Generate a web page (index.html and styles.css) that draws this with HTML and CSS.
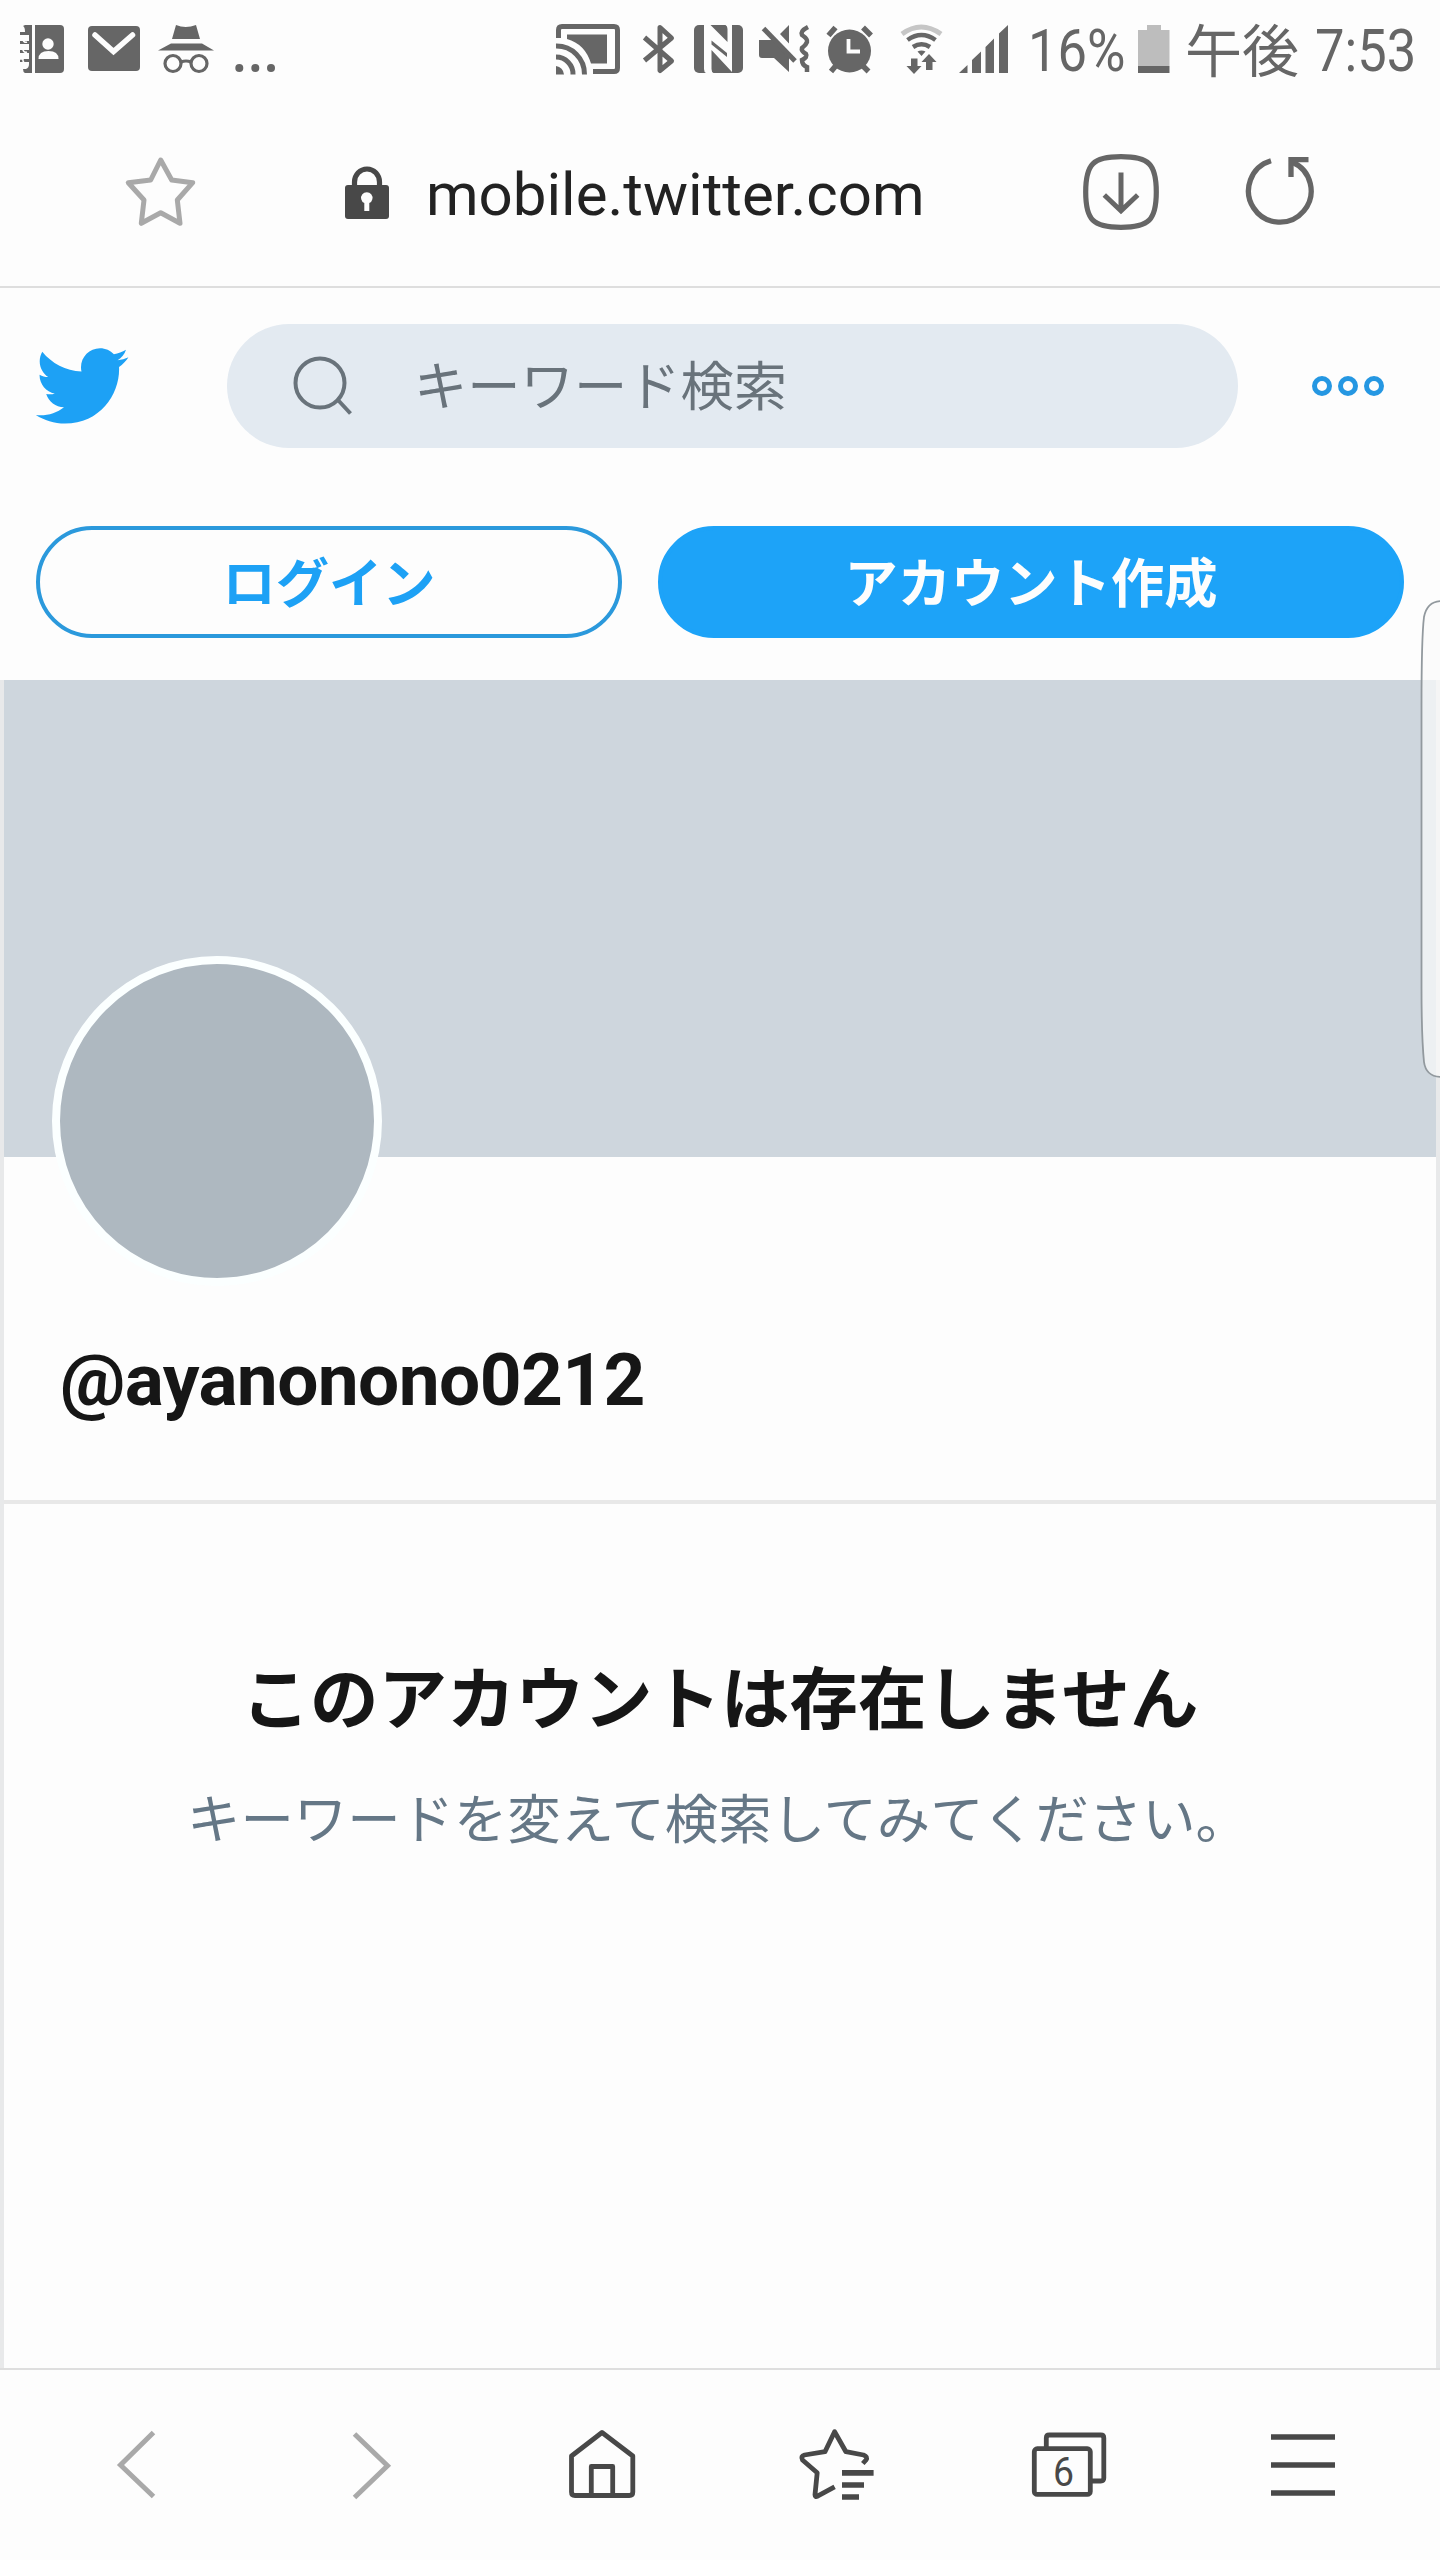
FILE: index.html
```html
<!DOCTYPE html>
<html lang="ja">
<head>
<meta charset="utf-8">
<title>mobile.twitter.com</title>
<link rel="stylesheet" href="styles.css">
</head>
<body>
<div class="screen">
  <header class="status">
    <div class="status-group">
      <svg width="60" height="64" viewBox="16 18 60 64">
        <path class="fill" d="M35 25h25q4 0 4 4v40q0 4-4 4H35z"/>
        <path class="fill" d="M25 25h7v48h-7q-2-1-2-4h3q3-1 3-5v-2h-9v-3h9v-6h-9v-3h9v-6h-9v-3h9v-6h-9v-3h5q0-5-2-6z"/>
        <path class="paper-line" d="M20 38h3v2q1 3 4 2M20 48h3v2q1 3 4 2M20 59h3v2q1 3 4 2"/>
        <circle class="paper" cx="48" cy="44" r="5.7"/>
        <path class="paper" d="M38.500 59q0-8 10-8t10 8z"/>
      </svg>
      <svg width="74" height="64" viewBox="76 18 74 64">
        <rect class="fill" x="88" y="26" width="52" height="45" rx="4"/>
        <path d="M95 35l18.500 16.500L132.500 35" fill="none" stroke="#fdfdfd" stroke-width="5.500" stroke-linecap="round"/>
      </svg>
      <svg width="75" height="64" viewBox="150 18 75 64">
        <path class="fill" d="M176 25q9.500 4 20 0l4 14h-28zM171 43.500h31l12 7h-56z"/>
        <g class="line" stroke-width="3.200"><circle cx="173" cy="63.500" r="8"/><circle cx="199" cy="63.500" r="8"/><path d="M181 62q5-2 10 0"/></g>
      </svg>
      <svg width="60" height="64" viewBox="225 18 60 64">
        <g class="fill"><circle cx="239.300" cy="68" r="4"/><circle cx="255.300" cy="68" r="4"/><circle cx="271" cy="68" r="4"/></g>
      </svg>
    </div>
    <div class="status-group">
      <svg width="80" height="64" viewBox="550 18 80 64">
        <path class="line" stroke-width="5" d="M558.500 38V30q0-3.500 3.500-3.500h52q3.500 0 3.500 3.500v38q0 3.500-3.500 3.500H593"/>
        <path class="fill" d="M567 34.500h40v29H591Q585 44 567 39z"/>
        <path class="line" stroke-width="5" d="M556 46a28 28 0 0 1 28.500 28.500M556 57a17 17 0 0 1 17 17.500"/>
        <path class="fill" d="M556 66q7 1 8 8.500h-8z"/>
      </svg>
      <svg width="54" height="64" viewBox="630 18 54 64">
        <path class="line" stroke-width="5" stroke-linejoin="round" d="M644.500 37.500L671.500 61 660 70.500V27.500L671.500 38 644.500 60.500"/>
      </svg>
      <svg width="66" height="64" viewBox="684 18 66 64">
        <rect class="fill" x="694" y="25" width="49" height="48" rx="5"/>
        <path class="paper" d="M704 25h6.500l17 17V29q0-3-2-4h6.500v47L711.500 50v19q0 3 2 4H706q-2-1-2-4z"/>
        <path class="fill" d="M711.500 40.500v4L727 57v-4z"/>
      </svg>
      <svg width="66" height="64" viewBox="750 18 66 64">
        <path class="fill" d="M759 40h16l14 14v18L774 58H762q-3 0-3-3zM780 34l9-9v18.500z"/>
        <path class="line" stroke-width="5" d="M763.500 28.500L795 61"/>
        <path class="line" stroke-width="4.500" d="M808 27q-8 4-6 8 6 4 5 7t-5 6q-1 3 4 6 2 3-4 6 0 5 5 7v5"/>
      </svg>
      <svg width="70" height="64" viewBox="816 18 70 64">
        <circle class="fill" cx="849.500" cy="51" r="21.500"/>
        <path class="line" stroke-width="5.500" d="M828.500 35.500l7-8M871 35.500l-8-8M831 71.500l5-6M868.500 71.500l-6-6"/>
        <path d="M848.500 39v12.500H860" fill="none" stroke="#fdfdfd" stroke-width="3.800"/>
      </svg>
      <svg width="64" height="64" viewBox="886 18 64 64">
        <path d="M902 34q19-14 39 0" fill="none" stroke="#c6c6c6" stroke-width="5"/>
        <path class="line" stroke-width="4.500" d="M907.500 40q14-10 28 0M913 47q8.500-5.500 17 0"/>
        <path class="fill" d="M917.500 51.500q4-2 8 0l-4 4.500zM911 58.500h6.500V66h4l-7.500 8-7.500-8h4.500zM926 70V62h-4.500l7.500-8 7.500 8h-4v8z"/>
      </svg>
      <svg width="70" height="64" viewBox="950 18 70 64">
        <path class="fill" d="M959 73h8.500v-8zM972 73h9V51.500l-9 8.500zM985.500 73h8.500V38.500l-8.500 8.500zM999 73h9V25l-9 8.500z"/>
      </svg>
      <span class="level">16%</span>
      <svg width="44" height="64" viewBox="1132 18 44 64">
        <path d="M1147 25h14v5h8.500v36h-31.500V30h9z" fill="#bdbdbd"/>
        <path class="fill" d="M1138 66h31.500v7H1138z"/>
      </svg>
      <span class="meridiem">午後</span>
      <span class="clock">7:53</span>
    </div>
  </header>

  <div class="address">
    <svg class="bookmark" width="76" height="76" viewBox="122 154 76 76">
      <path d="M160.700 160l11 20 21 2.700L177.300 200l2.700 23.300-19.300-10.600-19.400 10.600L144 200l-15.700-17.300 22.400-2.700z" fill="none" stroke="#a9a9a9" stroke-width="5" stroke-linejoin="round"/>
    </svg>
    <div class="url">
      <svg width="44" height="56" viewBox="345 164 44 56">
        <path d="M354.500 187v-5a12 12.500 0 0 1 25 0v5" fill="none" stroke="#484848" stroke-width="5.200"/>
        <rect x="345" y="185" width="44" height="34" rx="3" fill="#484848"/>
        <path class="paper" d="M364.300 211v-8a5.700 5.700 0 1 1 5 0v8z"/>
      </svg>
      <span class="host">mobile.twitter.com</span>
    </div>
    <svg class="download" width="80" height="80" viewBox="1080.700 152.500 80 80">
      <path class="line" stroke-width="5.200" d="M1120.700 157.200c28 0 35.300 7.300 35.300 35.300s-7.300 35.300-35.300 35.300-35.300-7.300-35.300-35.300 7.300-35.300 35.300-35.300z"/>
      <path class="line" stroke-width="5" d="M1120.700 173v39M1104 195.500l16.700 15.700 16.700-15.700"/>
    </svg>
    <svg class="reload" width="76" height="80" viewBox="1242 152 76 80">
      <path class="line" stroke-width="5.300" d="M1272 160.800A31.300 31.300 0 1 0 1293 162"/>
      <path class="line" stroke-width="5.300" d="M1292 177V159.600h17.500"/>
    </svg>
  </div>

  <nav class="topbar">
    <svg class="bird" width="98" height="98" viewBox="0 0 24 24"><path fill="#1da1f5" d="M23.643 4.937c-.835.37-1.732.62-2.675.733.962-.576 1.700-1.490 2.048-2.578-.9.534-1.897.922-2.958 1.130-.85-.904-2.060-1.470-3.400-1.470-2.572 0-4.658 2.086-4.658 4.660 0 .364.042.718.120 1.060-3.873-.195-7.304-2.050-9.602-4.868-.4.690-.630 1.490-.630 2.342 0 1.616.823 3.043 2.072 3.878-.764-.025-1.482-.234-2.110-.583v.060c0 2.257 1.605 4.140 3.737 4.568-.392.106-.803.162-1.227.162-.3 0-.593-.028-.877-.082.593 1.850 2.313 3.198 4.352 3.234-1.595 1.250-3.604 1.995-5.786 1.995-.376 0-.747-.022-1.112-.065 2.062 1.323 4.510 2.093 7.140 2.093 8.570 0 13.255-7.098 13.255-13.254 0-.2-.005-.402-.014-.602.910-.658 1.700-1.477 2.323-2.410z"/></svg>
    <div class="search">
      <svg width="62" height="62" viewBox="292 355 62 62">
        <g fill="none" stroke="#69737b" stroke-width="4"><circle cx="320" cy="383" r="24.500"/><path d="M337.500 399.500l13 14"/></g>
      </svg>
      <span>キーワード検索</span>
    </div>
    <svg class="more" width="76" height="24" viewBox="1310 374 76 24">
      <g fill="none" stroke="#2597e2" stroke-width="5"><circle cx="1322" cy="386" r="7.500"/><circle cx="1348" cy="386" r="7.500"/><circle cx="1374" cy="386" r="7.500"/></g>
    </svg>
  </nav>

  <div class="actions">
    <a class="btn login">ログイン</a>
    <a class="btn signup">アカウント作成</a>
  </div>

  <main class="profile">
    <div class="banner"></div>
    <div class="identity">
      <div class="avatar"></div>
      <div class="handle">@ayanonono0212</div>
    </div>
    <section class="empty">
      <h1>このアカウントは存在しません</h1>
      <p>キーワードを変えて検索してみてください。</p>
    </section>
  </main>

  <footer class="toolbar">
    <svg class="nav-back" width="60" height="80" viewBox="106 2424 60 80"><path class="faint" d="M153.500 2431.500L120.500 2464l33 31.500"/></svg>
    <svg class="nav-forward" width="60" height="80" viewBox="341 2424 60 80"><path class="faint" d="M354.500 2433l33 31.800-33 31.700"/></svg>
    <svg class="nav-home" width="80" height="80" viewBox="562 2424 80 80"><path class="dark" d="M602 2431.500l30.800 23.500v36q0 3.500-3.500 3.500H575q-3.500 0-3.500-3.500v-36zM591.300 2494v-28.500h21.400V2494"/></svg>
    <svg class="nav-bookmarks" width="84" height="80" viewBox="796 2424 84 80">
      <path class="dark" d="M862.800 2462.500l3.200-3.500q2-3.300-2.500-5l-17.600-3.300-11.300-20-9.600 20-20.500 3.300q-4 1-2 5l14.700 12.700-2.200 22q0 2.500 2.500 1.500l17.100-9.400"/>
      <path d="M842 2469h31.600v5.700H842zM842 2481.300h22v5.400h-22zM842 2493.300h17v5.400h-17z" fill="#484848"/>
    </svg>
    <svg class="nav-tabs" width="84" height="80" viewBox="1028 2424 84 80">
      <path class="dark" d="M1046.300 2446v-9q0-3 3-3h51.500q3 0 3 3v40q0 3-3 3H1091"/>
      <rect class="dark" x="1034.300" y="2447.700" width="56" height="45.700" rx="3"/>
      <text class="tab-count" x="1063.500" y="2485" text-anchor="middle" textLength="21" lengthAdjust="spacingAndGlyphs">6</text>
    </svg>
    <svg width="64" height="80" viewBox="1271 2424 64 80"><path d="M1271 2433.300h64v5.400h-64zM1271 2461.300h64v5.400h-64zM1271 2489.300h64v5.400h-64z" fill="#484848"/></svg>
  </footer>

  <svg class="edge-panel" width="22" height="482" viewBox="1418 598 22 482">
    <path d="M1442 601q-15 0-18 16-2.500 20-2.500 90v280q0 50 2.500 75 2 15 18 15z" fill="#fafafa" fill-opacity=".72" stroke="#92999e" stroke-width="1.800"/>
  </svg>
</div>
</body>
</html>
```
FILE: styles.css
```css
* { box-sizing: border-box; }

body {
  margin: 0;
  background: #fdfdfd;
  font-family: Roboto, "Noto Sans CJK JP", sans-serif;
}

.screen {
  position: relative;
  display: flex;
  flex-direction: column;
  width: 1440px;
  height: 2560px;
  overflow: hidden;
}

svg { display: block; flex: none; }
.fill { fill: #666; }
.paper { fill: #fdfdfd; }
.paper-line { fill: none; stroke: #fdfdfd; stroke-width: 1.5; }
.line { fill: none; stroke: #666; }
.dark { fill: none; stroke: #484848; stroke-width: 4.8; stroke-linejoin: round; }
.faint { fill: none; stroke: #a9a9a9; stroke-width: 5; }

/* Device status bar */
.status {
  display: flex;
  justify-content: space-between;
  height: 100px;
  padding: 18px 20px 0 16px;
  color: #666;
}
.status-group { display: flex; height: 64px; }
.level, .clock {
  flex: none;
  font-size: 60px;
  line-height: 66px;
  transform: scaleX(.875);
  transform-origin: left;
}
.level { width: 104px; margin-left: 8px; }
.meridiem {
  width: 137px;
  padding-left: 9px;
  font: 57px/58px "Noto Sans CJK JP", sans-serif;
  white-space: nowrap;
}
.clock { width: 105px; margin-left: 2px; white-space: nowrap; }

/* Browser address row */
.address {
  display: flex;
  align-items: center;
  height: 188px;
  padding: 0 122px 2px;
  border-bottom: 2px solid #dedede;
}
.url {
  display: flex;
  align-items: center;
  width: 736px;
  margin-left: 147px;
  gap: 37px;
}
.host { font-size: 60px; line-height: 70px; color: #222; padding-top: 6px; }
.reload { margin-left: 80px; }

/* Site header */
.topbar {
  display: flex;
  align-items: center;
  height: 196px;
  padding: 0 54px 0 32px;
}
.search {
  display: flex;
  align-items: center;
  width: 1011px;
  height: 124px;
  margin: 0 72px 0 97px;
  padding-left: 65px;
  gap: 60px;
  border-radius: 62px;
  background: #e3eaf1;
  color: #69737b;
  font-size: 53.3px;
}
.search span { padding-bottom: 7px; }
.actions {
  display: flex;
  gap: 36px;
  height: 196px;
  padding: 42px 36px 0;
}
.btn {
  display: flex;
  align-items: center;
  justify-content: center;
  height: 112px;
  padding-bottom: 6px;
  border: 4px solid #1da1f5;
  border-radius: 56px;
  font-size: 53.3px;
  font-weight: 700;
}
.login { width: 586px; border-color: #2b99dc; color: #1da1f5; }
.signup { width: 746px; border-color: #1da3f8; background: #1da3f8; color: #fdfdfd; }

/* Profile column */
.profile {
  flex: 1;
  display: flex;
  flex-direction: column;
  border: solid #e8e9ea;
  border-width: 0 4px;
}
.banner { height: 477px; background: #ced6dd; }
.identity {
  height: 347px;
  padding-left: 48px;
  border-bottom: 4px solid #e8e8e8;
}
.avatar {
  width: 330px;
  height: 330px;
  margin-top: -201px;
  border: 8px solid #fbffff;
  border-radius: 50%;
  background: #aeb8c0;
}
.handle {
  margin: 48px 0 0 8px;
  font-size: 73px;
  line-height: 92px;
  letter-spacing: -.6px;
  font-weight: 700;
  color: #161616;
}
.empty { padding-top: 147px; text-align: center; }
.empty h1 { margin: 0; font-size: 68.5px; line-height: 100px; color: #161616; }
.empty p { margin: 30px 4px 0 0; font-size: 53.4px; line-height: 80px; color: #657786; }

/* Browser toolbar */
.toolbar {
  display: flex;
  align-items: center;
  height: 192px;
  padding-left: 106px;
  border-top: 2px solid #dedede;
}
.nav-back { margin-right: 175px; }
.nav-forward { margin-right: 161px; }
.nav-home { margin-right: 154px; }
.nav-bookmarks { margin-right: 148px; }
.nav-tabs { margin-right: 159px; }
.tab-count { font-size: 41px; fill: #484848; }

/* Handle resting over the right edge of the screen */
.edge-panel { position: absolute; right: 0; top: 598px; }
```
